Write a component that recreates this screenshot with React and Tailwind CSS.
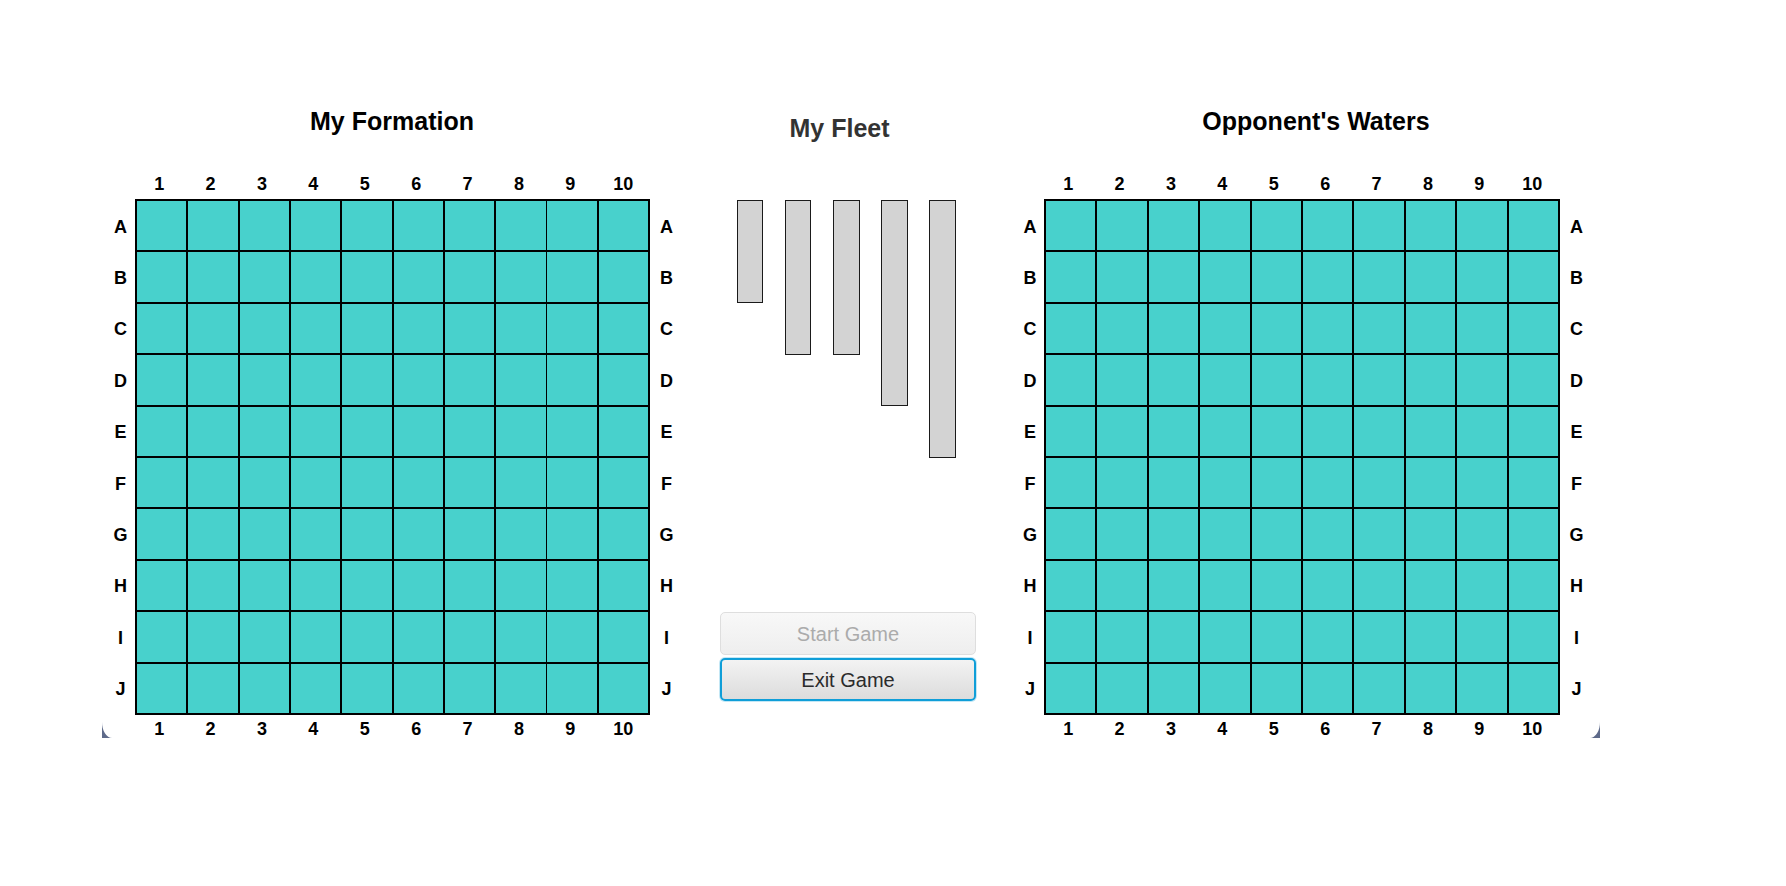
import React from 'react';

const ROWS = ['A', 'B', 'C', 'D', 'E', 'F', 'G', 'H', 'I', 'J'];
const COLS = [1, 2, 3, 4, 5, 6, 7, 8, 9, 10];
const SHIPS = [2, 3, 3, 4, 5];

const font = "font-['Liberation_Sans',Arial,sans-serif]";

function Corner({ side }) {
  return (
    <svg width="10" height="16" viewBox="0 0 10 16" className="block">
      {side === 'left' ? (
        <path d="M0 0 L0 16 L10 16 A10 16 0 0 1 0 0 Z" fill="#5e6a8a" />
      ) : (
        <path d="M10 0 L10 16 L0 16 A10 16 0 0 0 10 0 Z" fill="#5e6a8a" />
      )}
    </svg>
  );
}

function NumberRow() {
  return (
    <div className="flex h-[18px] pl-[1px] text-[18px] font-bold leading-none text-black">
      {COLS.map((n) => (
        <div key={n} className={`w-[51.4px] text-center ${n < 10 ? 'pr-[5px]' : 'pr-[2px]'}`}>
          {n}
        </div>
      ))}
    </div>
  );
}

function Labels({ className }) {
  return (
    <div className={`flex flex-col pt-[2px] text-[18px] font-bold leading-none text-black ${className}`}>
      {ROWS.map((r) => (
        <div key={r} className="flex h-[51.4px] items-center justify-center">
          {r}
        </div>
      ))}
    </div>
  );
}

function Grid() {
  return (
    <div className="grid w-[516px] grid-cols-10 border border-black">
      {ROWS.map((r) =>
        COLS.map((c) => (
          <div key={r + c} className="h-[51.4px] w-[51.4px] border border-black bg-[#48d1cc]" />
        ))
      )}
    </div>
  );
}

function Board({ title, side }) {
  const left = side === 'left';
  return (
    <div className={`flex flex-col ${left ? 'w-[578px]' : 'w-[586px]'}`}>
      <h2 className={`h-[25px] text-center text-[25px] font-bold leading-none text-black ${left ? 'pl-[2px]' : 'pl-[14px]'}`}>
        {title}
      </h2>

      <div className={`mt-[41px] flex ${left ? 'pl-[33px]' : 'pl-[28px]'}`}>
        <NumberRow />
      </div>

      <div className="mt-[6px] flex">
        {left ? <Labels className="w-[33px] pl-[4px]" /> : <Labels className="w-[28px]" />}
        <Grid />
        <Labels className="w-[30px] pl-[3px]" />
      </div>

      <div className="mt-[5px] flex items-end">
        {left ? (
          <>
            <div className="flex h-[18px] w-[33px] items-end">
              <Corner side="left" />
            </div>
            <NumberRow />
          </>
        ) : (
          <>
            <div className="w-[28px]" />
            <NumberRow />
            <div className="flex h-[18px] w-[41px] items-end justify-end">
              <Corner side="right" />
            </div>
          </>
        )}
      </div>
    </div>
  );
}

function Fleet() {
  return (
    <div className="flex w-[256px] flex-col pt-[7px]">
      <h2 className="h-[25px] pr-[17px] text-center text-[25px] font-bold leading-none text-[#333333]">
        My Fleet
      </h2>

      <div className="mt-[59px] flex h-[258px] items-start gap-[21.4px] pl-[16.7px]">
        {SHIPS.map((len, i) => (
          <div
            key={i}
            className="w-[26.7px] border-[1.5px] border-[#1a1a1a] bg-[#d3d3d3]"
            style={{ height: len * 51.6 }}
          />
        ))}
      </div>

      <div className="mt-[154px] flex flex-col gap-[3px]">
        <button
          disabled
          className="h-[43px] w-[256px] rounded-[5px] border border-[#dedede] bg-gradient-to-b from-[#f8f8f8] to-[#eeeeee] text-[20px] text-[#ababab]"
        >
          Start Game
        </button>
        <button className="h-[43px] w-[256px] rounded-[5px] border-2 border-[#0f9ed8] bg-gradient-to-b from-[#f3f3f3] to-[#dcdcdc] text-[20px] text-[#2b2b2b] shadow-[0_0_0_1px_rgba(15,158,216,0.25)]">
          Exit Game
        </button>
      </div>
    </div>
  );
}

export default function App() {
  return (
    <div className={`h-[886px] w-[1786px] bg-white ${font}`}>
      <div className="flex items-start pl-[102px] pt-[109px]">
        <Board title="My Formation" side="left" />
        <div className="ml-[40px]">
          <Fleet />
        </div>
        <div className="ml-[40px]">
          <Board title="Opponent's Waters" side="right" />
        </div>
      </div>
    </div>
  );
}
